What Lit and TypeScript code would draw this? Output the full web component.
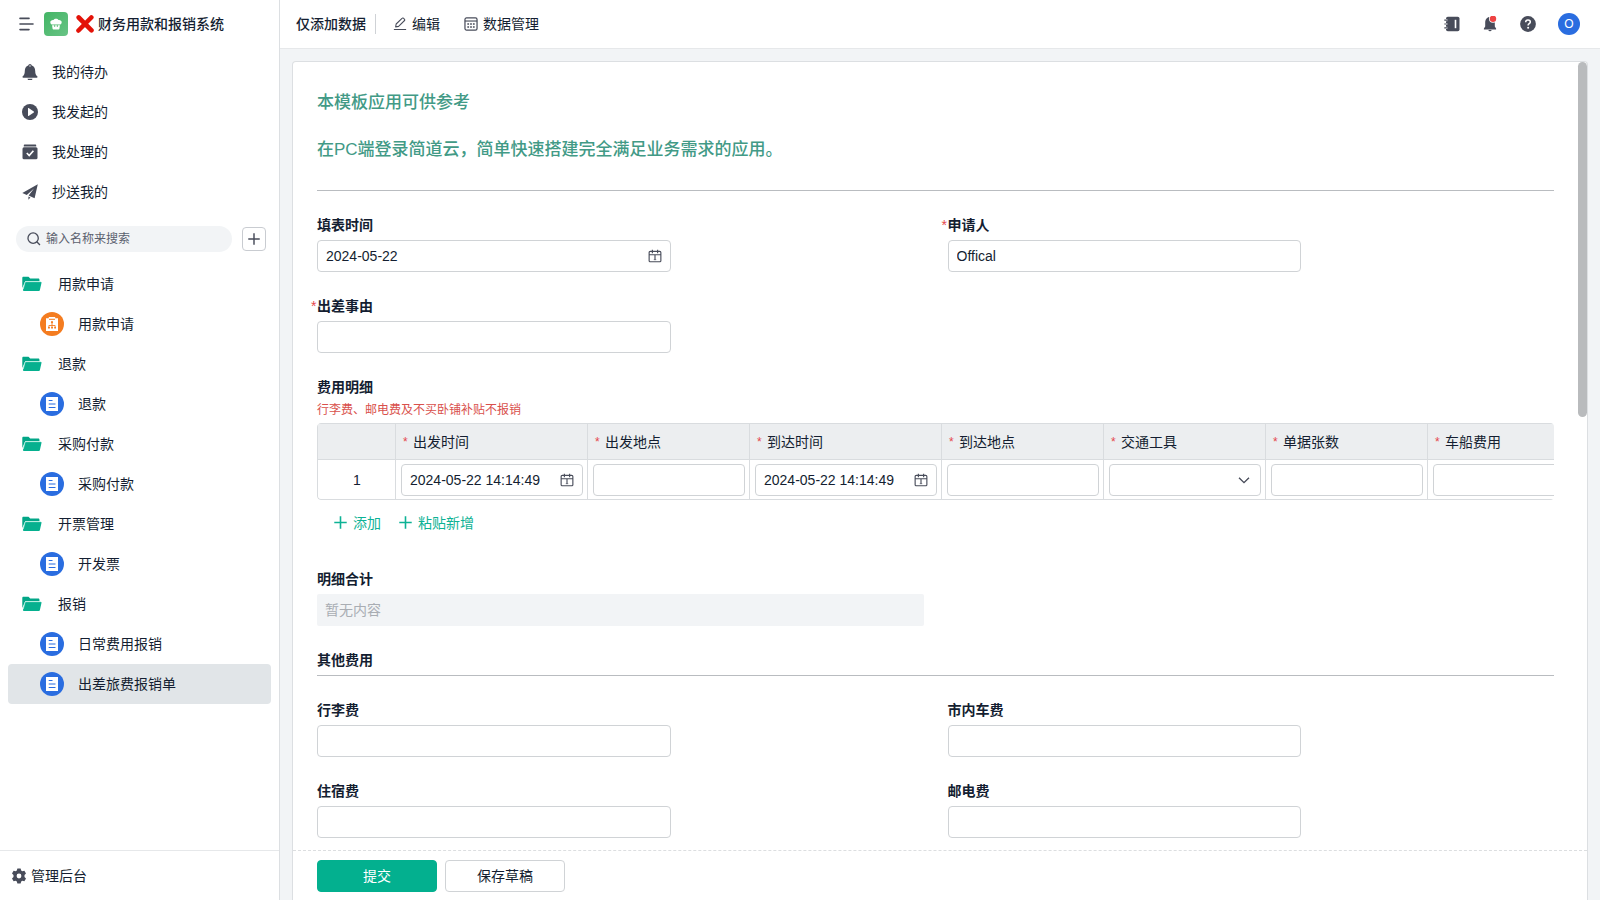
import { LitElement, html, css, svg, nothing } from "lit";
import { customElement } from "lit/decorators.js";
import { classMap } from "lit/directives/class-map.js";

const base = css`
  :host {
    box-sizing: border-box;
    font-family: "Liberation Sans", "Noto Sans CJK SC", sans-serif;
    font-size: 14px;
    line-height: 22px;
    color: #141e31;
  }
  *,
  *::before,
  *::after {
    box-sizing: border-box;
  }
  button,
  input,
  select {
    font: inherit;
    color: inherit;
    margin: 0;
    padding: 0;
    border: 0;
    background: none;
  }
  button {
    cursor: pointer;
  }
  a {
    color: inherit;
    text-decoration: none;
  }
  svg {
    display: block;
    flex: none;
  }
  .icon {
    color: #484c5a;
  }
`;

const shapes = {
  menu: svg`<path d="M2 2.400h9M2 8h13M2 13.600h9" fill="none" stroke="currentColor" stroke-width="1.600" stroke-linecap="round"/>`,
  bell: svg`<path d="M8 0a1.900 1.900 0 0 0-1.800 1.500C3.900 2.300 2.900 4.300 2.800 7c-.1 2.600-.4 3.900-2 5.300-.6.600-.3 1.500.500 1.500h13.400c.8 0 1.100-.9.500-1.500-1.600-1.400-1.900-2.700-2-5.300-.1-2.700-1.100-4.700-3.400-5.500A1.900 1.900 0 0 0 8 0zm-2.500 14.800a2.600 2.600 0 0 0 5 0z" fill="currentColor"/><circle cx="8" cy="2" r=".7" fill="#fff"/>`,
  play: svg`<circle cx="8" cy="8" r="8" fill="currentColor"/><path d="M6 4.300v7.400c0 .3.300.5.600.3l5.200-3.600c.3-.2.300-.6 0-.8L6.600 4c-.3-.2-.6 0-.6.300z" fill="#fff"/>`,
  done: svg`<path d="M2.500.5h11a.7.7 0 0 1 .7.700v1.300H1.800V1.200a.7.7 0 0 1 .7-.7z" fill="currentColor"/><rect x=".5" y="3.300" width="15" height="12" rx="1.500" fill="currentColor"/><path d="M4.800 9l2.400 2.500 4.200-4.700" fill="none" stroke="#fff" stroke-width="1.700"/>`,
  plane: svg`<path d="M15.800.3L.3 8.900l4.500 2L12 4.600l-5.400 7 6 2.600zM6.400 12.600v3.200l2-2.300z" fill="currentColor"/>`,
  search: svg`<circle cx="7" cy="7" r="5.900" fill="none" stroke="currentColor" stroke-width="1.500"/><path d="M11.200 11.200l3.600 3.600" stroke="currentColor" stroke-width="1.500"/>`,
  plus: svg`<path d="M7 .3v13.400M.3 7h13.400" fill="none" stroke="currentColor" stroke-width="1.700"/>`,
  gear: svg`<path fill-rule="evenodd" d="M6.400.5h3.200l.6 2.100 1 .6 2.200-.5 1.600 2.700L13.500 7v2l1.500 1.600-1.600 2.700-2.200-.5-1 .6-.6 2.100H6.400l-.6-2.100-1-.6-2.200.5L1 10.600 2.500 9V7L1 5.400l1.600-2.700 2.200.5 1-.6zM8 5.600a2.400 2.400 0 1 0 0 4.800 2.400 2.400 0 0 0 0-4.800z" fill="currentColor"/>`,
  pencil: svg`<path d="M1 14.300h14M3 11.300l.6-3.300 7-6.600a.9.900 0 0 1 1.300 0l1.300 1.300a.9.900 0 0 1 0 1.300L6.400 10.700z" fill="none" stroke="currentColor" stroke-width="1.200" stroke-linejoin="round"/>`,
  grid: svg`<rect x="1.100" y="1.100" width="13.800" height="13.800" rx="1.800" fill="none" stroke="currentColor" stroke-width="1.400"/><path d="M1 4.600h14" stroke="currentColor" stroke-width="1.300"/><path d="M3.800 8h2M7 8h2M10.200 8h2M3.800 11.500h2M7 11.500h2M10.200 11.500h2" stroke="currentColor" stroke-width="1.600"/>`,
  book: svg`<rect x="2" y=".7" width="13.500" height="14.600" rx="1.800" fill="currentColor"/><path d="M.3 4.200h3M.3 8h3M.3 11.800h3" stroke="#fff" stroke-width="2.200"/><path d="M.3 4.200h3M.3 8h3M.3 11.800h3" stroke="currentColor" stroke-width="1.200"/><path d="M11.500 3.800v8.400" stroke="#fff" stroke-width="1.600"/>`,
  notice: svg`<path d="M8 1C4.800 1 3.200 3.500 3.200 6.500v4L1.900 12.400v1h12.200v-1l-1.300-1.900v-4C12.800 3.500 11.200 1 8 1zM6.300 14.100a1.800 1.800 0 0 0 3.400 0z" fill="currentColor"/><circle cx="11" cy="2.800" r="4" fill="#fff"/><circle cx="11" cy="2.800" r="3.200" fill="#ee4444"/>`,
  help: svg`<circle cx="8" cy="8" r="7.900" fill="currentColor"/><path d="M5.700 6.300c0-1.400 1-2.200 2.300-2.200s2.300.8 2.300 2c0 1.600-2.200 1.600-2.200 3.300" fill="none" stroke="#fff" stroke-width="1.500"/><circle cx="8.100" cy="11.700" r="1" fill="#fff"/>`,
  calendar: svg`<path d="M2.600 2.700h10.800a1.300 1.300 0 0 1 1.300 1.300v9.300a1.300 1.300 0 0 1-1.300 1.300H2.600a1.300 1.300 0 0 1-1.300-1.300V4a1.300 1.300 0 0 1 1.300-1.300zM1.300 6.600h13.400M5 .8v4M11 .8v4M8 6.600v5.600" fill="none" stroke="currentColor" stroke-width="1.300"/><path d="M6.600 12.200h2.800" stroke="currentColor" stroke-width=".8"/>`,
  chevron: svg`<path d="M2.300 5.300L8 11l5.700-5.700" fill="none" stroke="currentColor" stroke-width="1.600"/>`,
  folder: svg`<path d="M.3 1.700C.3 1 .8.500 1.500.5h5.200l1.700 1.900h8.300c.7 0 1.200.5 1.200 1.200v1.600H3.300L.3 12z" fill="#02a687"/><path d="M3.900 5.900h15.600c.4 0 .6.300.5.700l-1.700 7.700c-.1.500-.5.800-1 .8H1.700c-.5 0-.8-.4-.7-.9l1.900-7.600c.1-.4.500-.7 1-.7z" fill="#06b08f"/><path d="M1.300 13L3 6.400c.1-.5.500-.8 1-.8h15.300" fill="none" stroke="#b5f0e0" stroke-width=".8"/>`,
  cross: svg`<path d="M2.700 2.500l12.800 12.800M15.300 2.500L2.500 15.500" stroke="#e31208" stroke-width="4.600" stroke-linecap="round"/>`,
  cake: svg`<path d="M8 2c1.300 0 2.300.6 2.800 1.500 1.800-.4 3.700.8 3.700 2.500 0 1.500-.8 2.300-1.700 2.600H3.200C2.300 8.300 1.500 7.500 1.500 6c0-1.700 1.900-2.900 3.700-2.500C5.700 2.600 6.700 2 8 2zM3.500 9.300h9l-.6 4c-.1.600-.4.900-1 .9H5.100c-.6 0-.9-.3-1-.9z" fill="#fff"/><path d="M6.500 9v2.400M9.500 9v2.400" stroke="#55b96d" stroke-width="1"/>`,
  sheet: svg`<path d="M2 1h12v14H2z" fill="#fff"/><path d="M4.700 4.500h3.800M4.700 8h6.800M4.700 11.500h6.800" stroke="#2a6de0" stroke-width="1.200"/>`,
  board: svg`<path d="M2 2.200h2.800V1h6.400v1.200H14V15H2z" fill="#fff"/><path d="M5 3.300h6" stroke="#f47c20" stroke-width="1"/><circle cx="8" cy="6.200" r="1.100" fill="#f47c20"/><path d="M8 7v2.500M4.900 11.500v-2h6.200v2M8 9.500v2" fill="none" stroke="#f47c20" stroke-width=".9"/><path d="M4 11h1.900v1.600H4zM7.100 11H9v1.600H7.100zM10.200 11H12v1.600h-1.800z" fill="#f47c20"/>`,
};

type Shape = keyof typeof shapes;

const icon = (name: Shape, size = 16, box = "0 0 16 16", height = size) =>
  html`<svg class="icon" width=${size} height=${height} viewBox=${box} aria-hidden="true">${shapes[name]}</svg>`;

@customElement("app-sidebar")
class AppSidebar extends LitElement {
  static styles = [
    base,
    css`
      :host {
        display: flex;
        flex-direction: column;
        width: 280px;
        flex: none;
        border-right: 1px solid #dcdfe2;
        background: #fff;
      }
      .brand {
        display: flex;
        align-items: center;
        height: 48px;
        padding-left: 18px;
      }
      .menu {
        margin-right: 10px;
      }
      .logo {
        display: grid;
        place-items: center;
        width: 24px;
        height: 24px;
        border-radius: 4px;
        background: linear-gradient(135deg, #43b565, #68c385);
        margin-right: 8px;
      }
      .title {
        margin: 0 0 0 4px;
        font-size: 14px;
        font-weight: 500;
      }
      .nav {
        padding-top: 4px;
      }
      .link {
        display: flex;
        align-items: center;
        gap: 14px;
        height: 40px;
        padding-left: 22px;
      }
      .find {
        display: flex;
        align-items: center;
        gap: 10px;
        padding: 14px 13px 12px 16px;
      }
      .search {
        display: flex;
        align-items: center;
        flex: 1;
        gap: 5px;
        height: 26px;
        padding: 0 11px;
        border-radius: 13px;
        background: #f2f4f6;
      }
      .search input {
        flex: 1;
        min-width: 0;
        font-size: 12px;
        outline: none;
      }
      .search input::placeholder {
        color: #5b616e;
      }
      .add {
        display: grid;
        place-items: center;
        width: 24px;
        height: 24px;
        border: 1px solid #c9ccd1;
        border-radius: 4px;
      }
      .tree {
        flex: 1;
      }
      .row {
        display: flex;
        align-items: center;
        height: 40px;
        margin: 0 8px;
        border-radius: 4px;
      }
      .folder {
        gap: 16px;
        padding-left: 14px;
      }
      .leaf {
        gap: 14px;
        padding-left: 32px;
      }
      .current {
        background: #e1e5e8;
      }
      .badge {
        display: grid;
        place-items: center;
        width: 24px;
        height: 24px;
        border-radius: 50%;
        background: #2a6de0;
      }
      .orange {
        background: #f47c20;
      }
      .admin {
        display: flex;
        align-items: center;
        gap: 4px;
        height: 50px;
        padding-left: 11px;
        border-top: 1px solid #e6e8ea;
      }
    `,
  ];

  private links: [Shape, string][] = [
    ["bell", "我的待办"],
    ["play", "我发起的"],
    ["done", "我处理的"],
    ["plane", "抄送我的"],
  ];

  private groups = [
    { name: "用款申请", items: ["用款申请"], orange: true },
    { name: "退款", items: ["退款"] },
    { name: "采购付款", items: ["采购付款"] },
    { name: "开票管理", items: ["开发票"] },
    { name: "报销", items: ["日常费用报销", "出差旅费报销单"] },
  ];

  private current = "出差旅费报销单";

  render() {
    return html`
      <div class="brand">
        <button class="menu" aria-label="菜单">${icon("menu", 16)}</button>
        <span class="logo">${icon("cake", 14)}</span>
        ${icon("cross", 18, "0 0 18 18")}
        <h1 class="title">财务用款和报销系统</h1>
      </div>
      <nav class="nav">
        ${this.links.map(([name, text]) => html`<a class="link" href="#">${icon(name)}<span>${text}</span></a>`)}
      </nav>
      <div class="find">
        <label class="search">
          ${icon("search", 14)}
          <input type="text" placeholder="输入名称来搜索" aria-label="输入名称来搜索" />
        </label>
        <button class="add" aria-label="新建">${icon("plus", 12, "0 0 14 14")}</button>
      </div>
      <nav class="tree">
        ${this.groups.map(
          (g) => html`
            <button class="row folder">${icon("folder", 20, "0 0 20.500 16", 16)}<span>${g.name}</span></button>
            ${g.items.map(
              (item) => html`
                <a class=${classMap({ row: true, leaf: true, current: item === this.current })} href="#">
                  <span class=${classMap({ badge: true, orange: !!g.orange })}
                    >${g.orange ? icon("board") : icon("sheet")}</span
                  >
                  <span>${item}</span>
                </a>
              `,
            )}
          `,
        )}
      </nav>
      <a class="admin" href="#">${icon("gear", 16)}<span>管理后台</span></a>
    `;
  }
}

@customElement("app-topbar")
class AppTopbar extends LitElement {
  static styles = [
    base,
    css`
      :host {
        display: flex;
        align-items: center;
        justify-content: space-between;
        height: 49px;
        flex: none;
        padding: 0 20px 0 16px;
        border-bottom: 1px solid #e6e8ea;
        background: #fff;
      }
      .side {
        display: flex;
        align-items: center;
      }
      .mode {
        font-weight: 500;
        padding-right: 9px;
      }
      .rule {
        width: 1px;
        height: 20px;
        background: #cfd2d6;
        margin-right: 17px;
      }
      .action {
        display: flex;
        align-items: center;
        gap: 5px;
        margin-right: 24px;
      }
      .tools {
        gap: 22px;
      }
      .avatar {
        width: 22px;
        height: 22px;
        border-radius: 50%;
        background: #2a6de0;
        color: #fff;
        font-size: 12px;
      }
    `,
  ];

  render() {
    return html`
      <div class="side">
        <span class="mode">仅添加数据</span>
        <span class="rule"></span>
        <button class="action">${icon("pencil", 14)}<span>编辑</span></button>
        <button class="action">${icon("grid", 14)}<span>数据管理</span></button>
      </div>
      <div class="side tools">
        <button aria-label="通讯录">${icon("book", 16)}</button>
        <button aria-label="消息">${icon("notice", 16)}</button>
        <button aria-label="帮助">${icon("help", 16)}</button>
        <button class="avatar">O</button>
      </div>
    `;
  }
}

interface Column {
  name: string;
  kind: "time" | "text" | "choice";
}

@customElement("expense-form")
class ExpenseForm extends LitElement {
  static styles = [
    base,
    css`
      :host {
        display: flex;
        flex: 1;
        min-height: 0;
        padding: 12px 12px 0;
      }
      .card {
        display: flex;
        flex-direction: column;
        flex: 1;
        min-width: 0;
        border: 1px solid #dcdfe2;
        border-bottom: 0;
        border-radius: 4px 4px 0 0;
        background: #fff;
      }
      .view {
        position: relative;
        flex: 1;
        min-height: 0;
        display: flex;
      }
      .body {
        flex: 1;
        min-width: 0;
        overflow: hidden;
        padding: 29px 33px 24px 24px;
      }
      .thumb {
        position: absolute;
        top: 0;
        right: 0;
        width: 9px;
        height: 45%;
        border-radius: 5px;
        background: #b9bbbd;
      }
      .intro {
        padding-bottom: 28px;
        border-bottom: 1px solid #b9bcc0;
        font-size: 17px;
        line-height: 24px;
        font-weight: 500;
        color: #429a86;
      }
      .intro p {
        margin: 0;
      }
      .intro p + p {
        margin-top: 23px;
      }
      .fields {
        display: grid;
        grid-template-columns: 1fr 1fr;
        gap: 23px 24px;
        padding-top: 23px;
      }
      .wide {
        grid-column: 1 / -1;
        min-width: 0;
      }
      .first {
        grid-column: 1;
      }
      .name {
        display: block;
        margin: 0 0 4px;
        font-size: 14px;
        font-weight: 600;
      }
      .star {
        display: inline-block;
        width: 6px;
        margin-left: -6px;
        color: #e5484d;
        font-weight: 400;
      }
      .box {
        display: flex;
        align-items: center;
        height: 32px;
        padding: 0 8px;
        border: 1px solid #d0d3d6;
        border-radius: 4px;
        background: #fff;
      }
      .half {
        width: calc(100% * 7 / 12);
      }
      .box input {
        flex: 1;
        min-width: 0;
        height: 30px;
        outline: none;
      }
      .empty {
        width: 100%;
        height: 32px;
        padding: 0 8px;
        border-radius: 2px;
        background: #f2f4f6;
      }
      .empty::placeholder {
        color: #a9adb3;
      }
      .section {
        padding-bottom: 4px;
        border-bottom: 1px solid #b9bcc0;
      }
      .section .name {
        margin: 0;
      }
      .group {
        margin: 0;
      }
      .note {
        margin: 0 0 1px;
        font-size: 12px;
        line-height: 24px;
        color: #d9504c;
      }
      .scroller {
        overflow: hidden;
        border-radius: 4px;
      }
      table {
        table-layout: fixed;
        width: 1273px;
        border-collapse: separate;
        border-spacing: 0;
        border: 1px solid #d9dcdf;
        border-right: 0;
        border-radius: 4px;
      }
      th,
      td {
        padding: 0;
        border-right: 1px solid #d9dcdf;
      }
      th {
        height: 36px;
        font-weight: 400;
        text-align: left;
        background: #eceef0;
        border-bottom: 1px solid #d9dcdf;
      }
      td {
        height: 39px;
        padding: 4px 4px 3px 5px;
      }
      .index {
        width: 78px;
        text-align: center;
      }
      .time {
        width: 192px;
      }
      .text,
      .choice {
        width: 162px;
      }
      .head {
        display: flex;
        gap: 5px;
        padding-left: 7px;
      }
      .head .mark {
        width: 5px;
        color: #e5484d;
        font-size: 12px;
      }
      .pick {
        position: relative;
      }
      .pick select {
        flex: 1;
        height: 30px;
        appearance: none;
        outline: none;
      }
      .pick svg {
        position: absolute;
        right: 9px;
        pointer-events: none;
      }
      .more {
        display: flex;
        align-items: center;
        gap: 18px;
        height: 45px;
        padding-left: 17px;
      }
      .more button {
        display: flex;
        align-items: center;
        gap: 6px;
        color: #0db295;
      }
      .more .icon {
        color: inherit;
      }
      .foot {
        display: flex;
        gap: 8px;
        height: 50px;
        flex: none;
        padding: 9px 24px;
        border-top: 1px dashed #dcdee0;
      }
      .btn {
        width: 120px;
        height: 32px;
        border: 1px solid #d0d3d6;
        border-radius: 4px;
      }
      .primary {
        border-color: #03b08f;
        background: #03b08f;
        color: #fff;
      }
    `,
  ];

  private columns: Column[] = [
    { name: "出发时间", kind: "time" },
    { name: "出发地点", kind: "text" },
    { name: "到达时间", kind: "time" },
    { name: "到达地点", kind: "text" },
    { name: "交通工具", kind: "choice" },
    { name: "单据张数", kind: "text" },
    { name: "车船费用", kind: "text" },
  ];

  private field(id: string, name: string, o: { value?: string; star?: boolean; date?: boolean; first?: boolean } = {}) {
    return html`
      <div class=${classMap({ first: !!o.first })}>
        <label class="name" for=${id}>${o.star ? html`<span class="star">*</span>` : nothing}${name}</label>
        <div class="box half">
          <input id=${id} type="text" .value=${o.value ?? ""} />
          ${o.date ? icon("calendar", 14) : nothing}
        </div>
      </div>
    `;
  }

  private cell(col: Column) {
    if (col.kind === "choice") {
      return html`<div class="box pick">
        <select aria-label=${col.name}>
          <option></option>
        </select>
        ${icon("chevron", 14)}
      </div>`;
    }
    const time = col.kind === "time";
    return html`<div class="box">
      <input type="text" aria-label=${col.name} .value=${time ? "2024-05-22 14:14:49" : ""} />
      ${time ? icon("calendar", 14) : nothing}
    </div>`;
  }

  render() {
    return html`
      <form class="card" @submit=${(e: Event) => e.preventDefault()}>
        <div class="view">
          <div class="body">
            <div class="intro">
              <p>本模板应用可供参考</p>
              <p>在PC端登录简道云，简单快速搭建完全满足业务需求的应用。</p>
            </div>
            <div class="fields">
              ${this.field("date", "填表时间", { value: "2024-05-22", date: true })}
              ${this.field("person", "申请人", { value: "Offical", star: true })}
              ${this.field("reason", "出差事由", { star: true, first: true })}
              <section class="wide">
                <h2 class="name group">费用明细</h2>
                <p class="note">行李费、邮电费及不买卧铺补贴不报销</p>
                <div class="scroller">
                  <table>
                    <thead>
                      <tr>
                        <th class="index"></th>
                        ${this.columns.map(
                          (c) =>
                            html`<th class=${c.kind} scope="col">
                              <div class="head"><span class="mark">*</span><span>${c.name}</span></div>
                            </th>`,
                        )}
                      </tr>
                    </thead>
                    <tbody>
                      <tr>
                        <td class="index">1</td>
                        ${this.columns.map((c) => html`<td>${this.cell(c)}</td>`)}
                      </tr>
                    </tbody>
                  </table>
                </div>
                <div class="more">
                  <button type="button">${icon("plus", 13, "0 0 14 14")}<span>添加</span></button>
                  <button type="button">${icon("plus", 13, "0 0 14 14")}<span>粘贴新增</span></button>
                </div>
              </section>
              <div class="first">
                <label class="name" for="total">明细合计</label>
                <input id="total" class="empty" type="text" readonly placeholder="暂无内容" />
              </div>
              <div class="wide section"><h2 class="name">其他费用</h2></div>
              ${this.field("luggage", "行李费")} ${this.field("city", "市内车费")}
              ${this.field("hotel", "住宿费")} ${this.field("post", "邮电费")}
            </div>
          </div>
          <div class="thumb"></div>
        </div>
        <div class="foot">
          <button class="btn primary" type="submit">提交</button>
          <button class="btn" type="button">保存草稿</button>
        </div>
      </form>
    `;
  }
}

@customElement("app-root")
class AppRoot extends LitElement {
  static styles = css`
    :host {
      display: flex;
      height: 100vh;
      overflow: hidden;
      background: #f2f4f6;
    }
    .main {
      display: flex;
      flex-direction: column;
      flex: 1;
      min-width: 0;
    }
  `;

  render() {
    return html`
      <app-sidebar></app-sidebar>
      <main class="main">
        <app-topbar></app-topbar>
        <expense-form></expense-form>
      </main>
    `;
  }
}
